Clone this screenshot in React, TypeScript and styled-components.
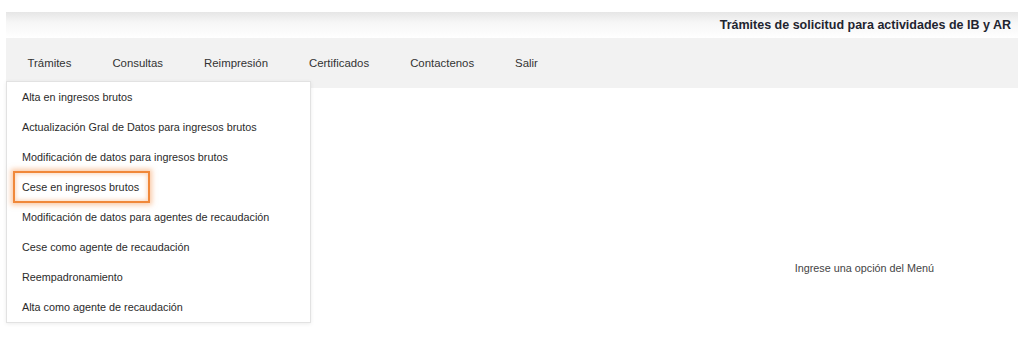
import React from "react";
import styled, { createGlobalStyle } from "styled-components";

const GlobalStyle = createGlobalStyle`
    html, body {
        margin: 0;
        padding: 0;
        background: #ffffff;
    }
    body {
        font-family: "Liberation Sans", Arial, sans-serif;
        color: #333;
    }
`;

const Page = styled.div`
    width: 1012px;
    padding: 12px 6px 0 6px;
    height: 325px;
    display: flex;
    flex-direction: column;
    position: relative;
`;

const Header = styled.div`
    height: 26px;
    display: flex;
    align-items: center;
    justify-content: flex-end;
    padding-right: 7px;
    background: linear-gradient(to bottom, #e6e6e6 0%, #f6f6f6 40%, #ffffff 100%);
`;

const Title = styled.h1`
    margin: 0;
    font-size: 12.5px;
    font-weight: bold;
    color: #1f2530;
`;

const NavBar = styled.nav`
    height: 50px;
    background: #f2f2f2;
    display: flex;
    align-items: center;
    padding-left: 1px;
`;

const NavItem = styled.div`
    padding: 0 20.5px;
    font-size: 11.4px;
    color: #333;
`;

const Content = styled.div`
    flex: 1;
    display: flex;
    justify-content: flex-end;
    padding-right: 84px;
    padding-top: 174px;
`;

const Hint = styled.p`
    margin: 0;
    font-size: 10.8px;
    color: #444;
`;

const Dropdown = styled.ul`
    position: absolute;
    top: 81px;
    left: 6px;
    width: 303px;
    margin: 0;
    padding: 0;
    list-style: none;
    background: #fff;
    border: 1px solid #e2e2e2;
    box-shadow: 0 1px 4px rgba(0, 0, 0, 0.08);
`;

const MenuItem = styled.li<{ $active?: boolean }>`
    height: 30px;
    display: flex;
    align-items: center;
    padding-left: ${p => (p.$active ? "6px" : "15px")};
    font-size: 10.8px;
    color: #2b2b2b;

    span {
        display: flex;
        align-items: center;
        height: ${p => (p.$active ? "28px" : "auto")};
        padding: ${p => (p.$active ? "0 9px 0 7px" : "0")};
        border: ${p => (p.$active ? "2px solid #f0883a" : "none")};
        box-shadow: ${p =>
            p.$active
                ? "0 0 5px 2px rgba(245, 150, 80, 0.5), inset 0 0 4px 1px rgba(245, 150, 80, 0.4)"
                : "none"};
    }
`;

const TRAMITES = [
    "Alta en ingresos brutos",
    "Actualización Gral de Datos para ingresos brutos",
    "Modificación de datos para ingresos brutos",
    "Cese en ingresos brutos",
    "Modificación de datos para agentes de recaudación",
    "Cese como agente de recaudación",
    "Reempadronamiento",
    "Alta como agente de recaudación",
];

const NAV = ["Trámites", "Consultas", "Reimpresión", "Certificados", "Contactenos", "Salir"];

export default function App() {
    return (
        <>
            <GlobalStyle />
            <Page>
                <Header>
                    <Title>Trámites de solicitud para actividades de IB y AR</Title>
                </Header>
                <NavBar>
                    {NAV.map(n => (
                        <NavItem key={n}>{n}</NavItem>
                    ))}
                </NavBar>
                <Content>
                    <Hint>Ingrese una opción del Menú</Hint>
                </Content>
                <Dropdown>
                    {TRAMITES.map((t, i) => (
                        <MenuItem key={t} $active={i === 3}>
                            <span>{t}</span>
                        </MenuItem>
                    ))}
                </Dropdown>
            </Page>
        </>
    );
}
